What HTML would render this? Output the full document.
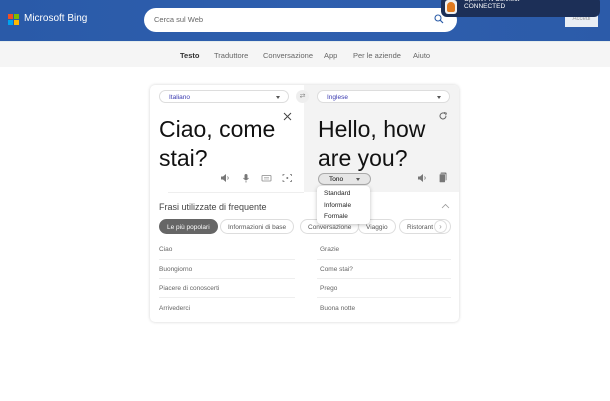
<!DOCTYPE html>
<html><head><meta charset="utf-8"><style>
*{box-sizing:border-box;margin:0;padding:0}
body{width:610px;height:401px;overflow:hidden;background:#fff;font-family:"Liberation Sans",sans-serif;position:relative}
.hdr{position:absolute;left:0;top:0;width:610px;height:41px;background:linear-gradient(90deg,#2a5aa8,#2e5fae 50%,#2c5ba9)}
.nav{position:absolute;left:0;top:41px;width:610px;height:26px;background:#f5f5f5;border-top:1px solid #e4ecec;font-size:7.5px;color:#666}
.nav span{position:absolute;top:9px}
.card{position:absolute;left:150px;top:85px;width:309px;height:237px;background:#fff;border-radius:5px;box-shadow:0 0 3px rgba(0,0,0,.18)}
.abs{position:absolute}
.sel{position:absolute;top:5px;height:13px;border:1px solid #ddd;border-radius:7px;background:#fff;font-size:6.5px;color:#3a3ab0;padding:3px 9px}
.sel:after{content:"";position:absolute;right:8px;top:5px;border:2.5px solid transparent;border-top:3px solid #555}
.big{font-size:23px;color:#111;line-height:29px}
.chip{position:absolute;top:134px;height:15px;border:1px solid #ddd;border-radius:8px;font-size:6.5px;color:#555;padding:4px 7px;background:#fff}
.ph{position:absolute;font-size:6.5px;color:#666}
.line{position:absolute;height:1px;background:#eee}
</style></head><body>
<div class="hdr">
 <div class="abs" style="left:8px;top:14px;width:11px;height:11px">
  <div class="abs" style="left:0;top:0;width:5px;height:5px;background:#f25022"></div>
  <div class="abs" style="left:6px;top:0;width:5px;height:5px;background:#7fba00"></div>
  <div class="abs" style="left:0;top:6px;width:5px;height:5px;background:#00a4ef"></div>
  <div class="abs" style="left:6px;top:6px;width:5px;height:5px;background:#ffb900"></div>
 </div>
 <div class="abs" style="left:24px;top:13px;font-size:10px;color:#fff">Microsoft Bing</div>
 <div class="abs" style="left:144px;top:8px;width:313px;height:24px;background:#fff;border-radius:12px"><span class="abs" style="left:10px;top:7px;font-size:7.5px;color:#666">Cerca sul Web</span>
 <svg class="abs" style="left:290px;top:6px" width="10" height="10" viewBox="0 0 10 10"><circle cx="4" cy="4" r="3" fill="none" stroke="#2b5ca8" stroke-width="1.1"/><path d="M6.2 6.2L9 9" stroke="#2b5ca8" stroke-width="1.2"/></svg></div>
 <div class="abs" style="left:565px;top:12px;width:33px;height:15px;background:#e9eef5;font-size:6px;color:#999;text-align:center;padding-top:4px">Accedi</div>
 <div class="abs" style="left:441px;top:-4px;width:159px;height:21px;background:#1c2f57;border-radius:6px">
  <div class="abs" style="left:4px;top:4px;width:12px;height:14px;background:#f0f0f0;border-radius:3px"><div class="abs" style="left:2px;top:2px;width:8px;height:10px;background:#e07a1f;border-radius:4px 4px 2px 2px"></div></div>
  <div class="abs" style="left:23px;top:0px;font-size:6.5px;color:#fff;line-height:7px">OpenVPN Connect<br>CONNECTED</div>
 </div>
</div>
<div class="nav">
 <span style="left:180px;color:#333;font-weight:bold">Testo</span>
 <span style="left:214px">Traduttore</span>
 <span style="left:263px">Conversazione</span>
 <span style="left:324px">App</span>
 <span style="left:353px">Per le aziende</span>
 <span style="left:413px">Aiuto</span>
</div>
<div class="card">
 <div class="abs" style="left:154px;top:0;width:155px;height:107px;background:#f3f3f3;border-radius:0 5px 0 0"></div>
 <div class="sel" style="left:9px;width:130px">Italiano</div>
 <div class="abs" style="left:146px;top:5px;width:13px;height:13px;border-radius:50%;background:#eee;font-size:7px;color:#888;text-align:center;line-height:13px">⇄</div>
 <div class="sel" style="left:167px;width:133px">Inglese</div>
 <div class="abs big" style="left:9px;top:30px">Ciao, come<br>stai?</div>
 <svg class="abs" style="left:133px;top:27px" width="9" height="9" viewBox="0 0 9 9"><path d="M1 1L8 8M8 1L1 8" stroke="#444" stroke-width="1"/></svg>
 <div class="abs big" style="left:168px;top:30px">Hello, how<br>are you?</div>
 <svg class="abs" style="left:288px;top:26px" width="10" height="10" viewBox="0 0 10 10"><path d="M8 5A3 3 0 1 1 7 2.7" fill="none" stroke="#666" stroke-width="1"/><path d="M6 1.5L8.3 2.2L7.6 4.4" fill="none" stroke="#666" stroke-width="1"/></svg>
 <svg class="abs" style="left:70px;top:88px" width="80" height="10" viewBox="0 0 80 10">
  <path d="M1 3.5H3L6 1V9L3 6.5H1Z" fill="#777"/><path d="M7.5 3.5Q9 5 7.5 6.5" stroke="#777" fill="none" stroke-width=".8"/>
  <rect x="24.5" y="1" width="3" height="5.5" rx="1.5" fill="#777"/><path d="M23.5 5Q26 8.5 28.5 5M26 7.5V9.5" stroke="#777" fill="none" stroke-width=".8"/>
  <rect x="42" y="2.5" width="9" height="5.5" rx=".5" fill="none" stroke="#888" stroke-width=".8"/><path d="M44 4.5H49M44 6H49" stroke="#888" stroke-width=".6"/>
  <path d="M63 3V1.5H64.5M70 1.5H71.5V3M71.5 7V8.5H70M64.5 8.5H63V7" stroke="#777" fill="none" stroke-width=".8"/><circle cx="67.3" cy="5" r="1" fill="#777"/>
 </svg>
 <svg class="abs" style="left:267px;top:88px" width="10" height="10" viewBox="0 0 10 10"><path d="M1 3.5H3L6 1V9L3 6.5H1Z" fill="#777"/><path d="M7.5 3.5Q9 5 7.5 6.5" stroke="#777" fill="none" stroke-width=".8"/></svg>
 <svg class="abs" style="left:289px;top:87px" width="8" height="11" viewBox="0 0 8 11"><rect x="1.5" y="0.5" width="6" height="8" rx=".8" fill="#777"/><rect x="0.3" y="2" width="6" height="8.5" rx=".8" fill="#777" stroke="#f3f3f3" stroke-width=".6"/></svg>
 <div class="abs" style="left:168px;top:88px;width:53px;height:12px;border:1px solid #aaa;border-radius:6px;background:#e6e6e6;font-size:6.5px;padding:2px 10px">Tono<span class="abs" style="left:37px;top:4px;border:2.5px solid transparent;border-top:3px solid #555"></span></div>
 <div class="abs" style="left:18px;top:107px;width:136px;height:1px;background:#eee"></div>
 <div class="abs" style="left:9px;top:117px;font-size:9px;color:#444">Frasi utilizzate di frequente</div>
 <svg class="abs" style="left:291px;top:118px" width="9" height="6" viewBox="0 0 9 6"><path d="M1 5L4.5 1.5L8 5" fill="none" stroke="#999" stroke-width=".8"/></svg>
 <div class="chip" style="left:9px;background:#666;color:#fff;border-color:#666">Le più popolari</div>
 <div class="chip" style="left:70px">Informazioni di base</div>
 <div class="chip" style="left:150px">Conversazione</div>
 <div class="chip" style="left:208px">Viaggio</div>
 <div class="chip" style="left:249px;width:52px">Ristorant</div>
 <div class="abs" style="left:284px;top:135px;width:13px;height:13px;border:1px solid #ddd;border-radius:50%;background:#fff;font-size:8px;color:#999;text-align:center;line-height:11px">›</div>
 <div class="ph" style="left:9px;top:161px">Ciao</div><div class="ph" style="left:170px;top:161px">Grazie</div>
 <div class="line" style="left:9px;top:174px;width:136px"></div><div class="line" style="left:167px;top:174px;width:134px"></div>
 <div class="ph" style="left:9px;top:181px">Buongiorno</div><div class="ph" style="left:170px;top:181px">Come stai?</div>
 <div class="line" style="left:9px;top:193px;width:136px"></div><div class="line" style="left:167px;top:193px;width:134px"></div>
 <div class="ph" style="left:9px;top:200px">Piacere di conoscerti</div><div class="ph" style="left:170px;top:200px">Prego</div>
 <div class="line" style="left:9px;top:212px;width:136px"></div><div class="line" style="left:167px;top:212px;width:134px"></div>
 <div class="ph" style="left:9px;top:220px">Arrivederci</div><div class="ph" style="left:170px;top:220px">Buona notte</div>
 <div class="abs" style="left:167px;top:101px;width:53px;height:38px;background:#fff;border-radius:4px;box-shadow:0 1px 4px rgba(0,0,0,.25);font-size:6.5px;color:#222;line-height:11.5px;padding:2px 7px">Standard<br>Informale<br>Formale</div>
</div>
</body></html>
